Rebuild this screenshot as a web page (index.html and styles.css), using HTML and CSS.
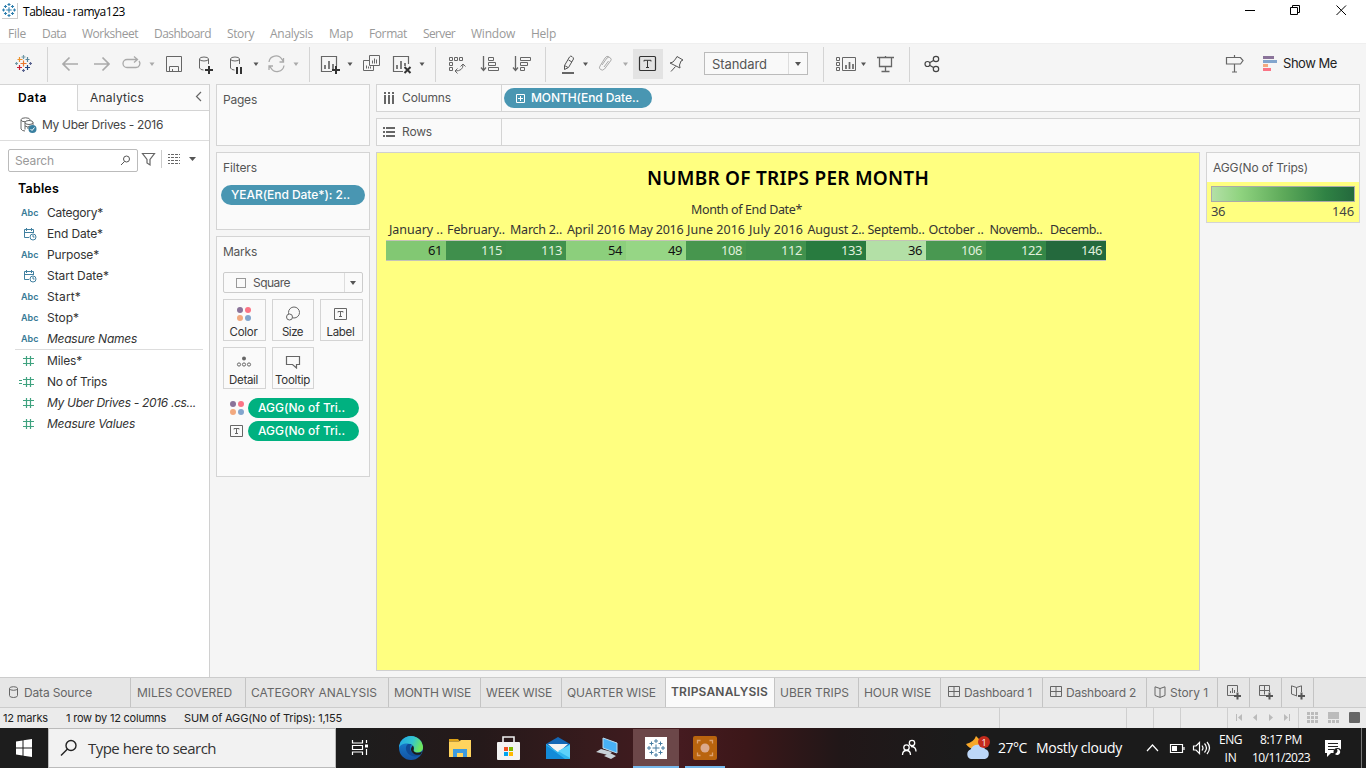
FILE: index.html
```html
<!DOCTYPE html>
<html lang="en">
<head>
<meta charset="utf-8">
<title>Tableau - ramya123</title>
<link rel="stylesheet" href="styles.css">
</head>
<body>
<svg class="defs" width="0" height="0">
  <defs>
    <symbol id="marks" viewBox="0 0 18 18"><path d="M9 5.500v7M5.500 9h7M9 0v4M7 2h4M9 14v4M7 16h4M0 9h4M2 7v4M14 9h4M16 7v4M4.500 2.500v4M2.500 4.500h4M13.500 2.500v4M11.500 4.500h4M4.500 11.500v4M2.500 13.500h4M13.500 11.500v4M11.500 13.500h4"/></symbol>
    <symbol id="dots" viewBox="0 0 14 14"><circle cx="3" cy="3" r="3" fill="#8a7399"/><circle cx="11" cy="3" r="3" fill="#fa7485"/><circle cx="3" cy="11" r="3" fill="#f2a97f"/><circle cx="11" cy="11" r="3" fill="#82a5cd"/></symbol>
    <symbol id="tee" viewBox="0 0 13 12"><path d="M.5.5h12v11H.5zM4 4.500v-1h5v1M6.500 3.500v5M5 8.500h3" fill="none" stroke="#666"/></symbol>
    <symbol id="hash" viewBox="0 0 20 12"><path d="M7.500 1v10M11.500 1v10M4 3.500h11M4 8.500h11" fill="none" stroke="#3fa27f" stroke-width="1.200"/></symbol>
    <symbol id="cal" viewBox="0 0 14 14"><path d="M6 10.500H1.500v-8h9V6M1.500 5.500h9M3.500 1v3M8.500 1v3" fill="none" stroke="#4180a0"/><circle cx="10" cy="10" r="3" fill="#fff" stroke="#4180a0"/><path d="M10 8v2h1.500" fill="none" stroke="#4180a0"/></symbol>
    <symbol id="grid" viewBox="0 0 12 11"><path d="M.5.500h11v10H.5zM.5 5.500h11M6 .5v10" fill="none" stroke="#666"/></symbol>
    <symbol id="book" viewBox="0 0 12 12"><path d="M6 2.500 1 .8v8.700l5 1.900 5-1.900V.8zM6 2.500v8.800" fill="none" stroke="#666"/></symbol>
  </defs>
</svg>

<header class="titlebar">
  <span class="appicon"><svg width="14" height="14"><use href="#marks"/></svg></span>
  <span class="apptitle" data-w="102">Tableau - ramya123</span>
  <svg class="winbtns" width="126" height="22" viewBox="1240 0 126 22" fill="none" stroke="#000"><path d="M1245 10.500h10M1290.500 7.500h7v7h-7zM1292.500 7.500v-2h7v7h-2M1336.500 5.500l9.500 9.500M1346 5.500l-9.500 9.500"/></svg>
</header>
<nav class="menu">
  <span style="width:34px"><b data-w="18">File</b></span><span style="width:40px"><b data-w="24">Data</b></span><span style="width:72px"><b data-w="56">Worksheet</b></span><span style="width:73px"><b data-w="57">Dashboard</b></span><span style="width:43px"><b data-w="27">Story</b></span><span style="width:59px"><b data-w="43">Analysis</b></span><span style="width:40px"><b data-w="24">Map</b></span><span style="width:54px"><b data-w="38">Format</b></span><span style="width:48px"><b data-w="32">Server</b></span><span style="width:60px"><b data-w="44">Window</b></span><span><b data-w="25">Help</b></span>
</nav>

<div class="toolbar">
  <svg width="48" height="35" viewBox="0 47 48 35" fill="none" stroke-width="1.200"><path stroke="#e8762c" d="M20.500 63.500h6M23.500 60.500v6"/><path stroke="#7199a6" d="M21.500 57h4M23.500 55v4M15 63.500h3M16.500 62v3"/><path stroke="#eb912c" d="M17.500 59.500h5M19.500 57v5"/><path stroke="#59879b" d="M25.500 59.500h4M27.500 57v5"/><path stroke="#c72035" d="M17 67.500h5M19.500 65v5"/><path stroke="#1f457e" d="M25 67.500h5M27.500 65v5"/><path stroke="#5b6591" d="M29 63.500h3M30.500 62v3M22 70.500h3M23.500 69v3"/></svg>
  <svg class="sep" width="262" height="35" viewBox="48 47 262 35" fill="none" stroke="#666">
    <g stroke="#aaa"><path stroke-width="1.700" d="M78 64H63M69.500 57.500 63 64l6.500 6.500M94 64h15M102.500 57.500 109 64l-6.500 6.500"/><path stroke-width="1.300" d="M130 59.500h-3a4 4 0 0 0 0 8h9a4 4 0 0 0 3-6.500M130 59.500h7M134 56.500l3.500 3-3.500 3"/><path stroke-width="1.300" d="M269 62a7 7 0 0 1 13-2.500l1.500 2M284 65.500a7 7 0 0 1-13 2.500l-1.500-2M283.500 58v4h-4M269 70v-4h4"/></g>
    <path d="M149.500 62.500h5L152 66zM293.500 62.500h5L296 66z" fill="#aaa" stroke="none"/>
    <path d="M166.500 56.500h15v15h-15zM169.500 71.500v-5h9v5M172.500 71v-2"/>
    <ellipse cx="204" cy="59" rx="4.500" ry="2"/><path d="M199.500 59v9q1 2 4 2M208.500 59v5"/><path stroke="#333" stroke-width="2" d="M205 70h8M209 66v8"/>
    <ellipse cx="235" cy="59" rx="4.500" ry="2"/><path d="M230.500 59v9q1 2 4 2M239.500 59v5"/><path stroke="#333" stroke-width="2" d="M237 67v7M241 67v7"/>
    <path d="M253.500 62.500h5L256 66z" fill="#555" stroke="none"/>
  </svg>
  <svg class="sep" width="126" height="35" viewBox="310 47 126 35" fill="none" stroke="#666">
    <path d="M332 71.500h-10.500v-15h15V66" stroke-width="1.200"/><path stroke-width="1.700" d="M325 69v-4M329 69v-8M333 69v-5"/><path stroke="#333" stroke-width="2" d="M332 70h8M336 66v8"/><path d="M347.500 62.500h5L350 66zM419.500 62.500h5L422 66z" fill="#555" stroke="none"/>
    <path d="M369.500 55.500h10v10h-10zM369 60.500h-5.500v10h10V66M372.500 63.500v-3M374.500 63.500v-5M376.500 63.500v-4M366.500 68.500v-3M368.500 68.500v-2M370.500 68.500v-2"/>
    <path d="M403 71.500h-9.500v-15h15V64" stroke-width="1.200"/><path stroke-width="1.700" d="M397 69v-4M401 69v-8M405 66v-3"/><path stroke="#333" stroke-width="2" d="M404.500 67l6 6M410.500 67l-6 6"/>
  </svg>
  <svg class="sep" width="110" height="35" viewBox="436 47 110 35" fill="none" stroke="#666">
    <path d="M449.500 57.500h3v3h-3zM454.500 57.500h3v3h-3zM459.500 57.500h3v3h-3zM449.500 62.500h3v3h-3zM449.500 67.500h3v3h-3zM455 71q8 0 8-6M457.500 68.500 455 71l2.500 2.500M460.500 66.500l2.500-2.500 2.500 2.500"/>
    <path stroke-width="1.300" d="M483.500 56v14M481 67.500l2.500 3 2.500-3M515.500 56v14M513 67.500l2.500 3 2.500-3"/><path d="M488.500 57.500h5v3h-5zM488.500 62.500h7v3h-7zM488.500 67.500h10v3h-10zM520.500 57.500h10v3h-10zM520.500 62.500h7v3h-7zM520.500 67.500h4v3h-4z"/>
  </svg>
  <svg class="sep" width="158" height="35" viewBox="546 47 158 35" fill="none" stroke="#555">
    <path fill="#e3e3e3" stroke="none" d="M633 49h30v30h-30z"/>
    <path d="M564.500 65.500l5-8.500q1-1.500 2.500-.5t1.500 2.500l-5 8.500-4 2zM564.500 65.500l3.500 2M568.500 60l3.500 2"/><path stroke="#666" stroke-width="2" d="M562 73h12"/><path d="M583 62.500h5l-2.500 3.500z" fill="#555" stroke="none"/>
    <path stroke="#aaa" d="M602 65l5-7q2-2 3.500 0t0 3l-6 8q-2 2-4 .5t-.5-3.500l5-8q2-3 4-1M604 67l4.500-6"/><path d="M623 62.500h5l-2.500 3.500z" fill="#aaa" stroke="none"/>
    <rect x="639.500" y="56.500" width="16" height="14" rx="1" stroke="#333" stroke-width="1.200"/><path stroke="#333" d="M644 61.500v-1.200h7v1.200M647.500 60.500v7M646 67.500h3"/>
    <path d="M677 56.500l6 3.500-2 1-1.500 4 .5 3-3-1.500-4-2-3-1.500 3-1 2.500-3zM675.500 66.500l-4.500 5"/>
  </svg>
  <div class="fit"><span data-w="55">Standard</span><i></i></div>
  <svg class="sep fitnext" width="86" height="35" viewBox="824 47 86 35" fill="none" stroke="#666">
    <path d="M836.500 57.500h3v3h-3zM836.500 62.500h3v3h-3zM836.500 67.500h3v3h-3zM842.500 57.500h13v13h-13z"/><path stroke-width="1.700" d="M846 69v-4M849.500 69v-7M853 69v-5"/><path d="M861 62.500h5l-2.500 3.500z" fill="#555" stroke="none"/>
    <path stroke-width="1.300" d="M877 57.500h17M879.500 58v8.500h12V58M885.500 56v1M885.500 67v4M881.500 71.500h8"/>
  </svg>
  <svg class="sep" width="40" height="35" viewBox="910 47 40 35" fill="none" stroke="#444" stroke-width="1.200"><circle cx="927.500" cy="64" r="2.500"/><circle cx="936" cy="59" r="2.700"/><circle cx="936" cy="69" r="2.700"/><path d="M930 62.500l3.500-2M930 65.500l3.500 2"/></svg>
  <svg class="guide" width="62" height="35" viewBox="1216 47 62 35" fill="none" stroke="#666" stroke-width="1.200"><path d="M1226.500 57.500h14l2.500 3-2.500 3.500h-14zM1234.500 55v2M1234.500 64v8M1232 72h5"/><g stroke="none"><path fill="#8a7399" d="M1263 56h11v3h-11z"/><path fill="#82a5cd" d="M1263 60h14v3h-14z"/><path fill="#f2a97f" d="M1263 64h5v3h-5z"/><path fill="#fa7485" d="M1263 68h8v3h-8z"/></g></svg>
  <span class="showme" data-w="54">Show Me</span>
</div>

<main class="work">
  <aside class="datapane">
    <div class="panetabs"><div class="on"><span data-w="29">Data</span></div><div class="off"><span data-w="54">Analytics</span><svg width="8" height="12" viewBox="0 0 8 12"><path d="M6 1 1.500 5.500 6 10" fill="none" stroke="#666" stroke-width="1.200"/></svg></div></div>
    <div class="source"><svg width="18" height="17" viewBox="0 0 18 17" fill="none" stroke="#666"><ellipse cx="5.500" cy="2.800" rx="4.500" ry="2"/><path d="M1 3v9q1 2 4 2"/><ellipse cx="9" cy="5.500" rx="4" ry="2" fill="#fff"/><path d="M5 5.500v7M5 9q3 2 5 0M13 5.500v3M7 11h3"/><circle cx="12.500" cy="12" r="4" fill="#387fa0" stroke="none"/><path stroke="#fff" d="M10.500 12l1.500 1.500 2.500-3"/></svg><span data-w="121">My Uber Drives - 2016</span></div>
    <div class="searchrow">
      <div class="search"><span data-w="39">Search</span><svg width="11" height="11" viewBox="0 0 11 11" fill="none" stroke="#555"><circle cx="6.500" cy="4" r="3"/><path d="M4.500 6.500 1 10"/></svg></div>
      <svg width="56" height="20" viewBox="141 150 56 20" fill="none" stroke="#666"><path stroke-width="1.200" d="M142.500 154.500h12l-4.500 6v5.500l-3-2v-3.500z"/><path stroke="#ccc" d="M161.500 151v18"/><path stroke-dasharray="2 1 3 1 3 1 2" d="M168 155.500h12M168 158.500h12M168 161.500h12M168 164.500h12"/><path fill="#555" stroke="none" d="M189 158h7l-3.500 4z"/></svg>
    </div>
    <h2><span data-w="41">Tables</span></h2>
    <ul class="fields">
      <li><em>Abc</em><span data-w="56">Category*</span></li>
      <li><svg width="14" height="14"><use href="#cal"/></svg><span data-w="56">End Date*</span></li>
      <li><em>Abc</em><span data-w="52">Purpose*</span></li>
      <li><svg width="14" height="14"><use href="#cal"/></svg><span data-w="62">Start Date*</span></li>
      <li><em>Abc</em><span data-w="34">Start*</span></li>
      <li><em>Abc</em><span data-w="32">Stop*</span></li>
      <li class="it"><em>Abc</em><span data-w="90">Measure Names</span></li>
    </ul>
    <ul class="fields measures">
      <li><svg width="20" height="12"><use href="#hash"/></svg><span data-w="35">Miles*</span></li>
      <li><svg width="20" height="12"><use href="#hash"/><path stroke="#3fa27f" d="M0 4.500h3M0 7.500h3"/></svg><span data-w="60">No of Trips</span></li>
      <li class="it"><svg width="20" height="12"><use href="#hash"/></svg><span data-w="149">My Uber Drives - 2016 .cs...</span></li>
      <li class="it"><svg width="20" height="12"><use href="#hash"/></svg><span data-w="88">Measure Values</span></li>
    </ul>
  </aside>

  <section class="cards">
    <div class="card pages"><h3 data-w="34">Pages</h3></div>
    <div class="card filters"><h3 data-w="34">Filters</h3><div class="pill blue"><span data-w="119">YEAR(End Date*): 2..</span></div></div>
    <div class="card marks">
      <h3 data-w="34">Marks</h3>
      <div class="marktype"><i class="sq"></i><span data-w="37">Square</span><i class="drop"></i></div>
      <div class="props">
        <div><svg width="14" height="14"><use href="#dots"/></svg><span data-w="28">Color</span></div>
        <div><svg width="16" height="16" viewBox="0 0 16 16" fill="none" stroke="#666"><circle cx="9" cy="6.500" r="5.500"/><circle cx="4.500" cy="11" r="3" fill="#fafafa"/></svg><span data-w="21">Size</span></div>
        <div><svg width="13" height="12"><use href="#tee"/></svg><span data-w="28">Label</span></div>
        <div><svg width="16" height="12" viewBox="0 0 16 12" fill="none" stroke="#666"><circle cx="8" cy="2.500" r="2" fill="#666" stroke="none"/><circle cx="3" cy="8.500" r="1.600"/><circle cx="8" cy="8.500" r="1.600"/><circle cx="13" cy="8.500" r="1.600"/></svg><span data-w="29">Detail</span></div>
        <div><svg width="16" height="14" viewBox="0 0 16 14"><path d="M1.500 1.500h13v8h-3v3.500l-4-3.500h-6z" fill="none" stroke="#666" stroke-width="1.200"/></svg><span data-w="35">Tooltip</span></div>
      </div>
      <div class="enc"><svg width="14" height="14"><use href="#dots"/></svg><div class="pill green"><span data-w="87">AGG(No of Tri..</span></div></div>
      <div class="enc"><svg width="14" height="12" viewBox="0 0 14 12"><use href="#tee" width="13" height="12"/></svg><div class="pill green"><span data-w="87">AGG(No of Tri..</span></div></div>
    </div>
  </section>

  <section class="canvas">
    <div class="shelf"><div class="label"><svg width="12" height="12" fill="#666"><path d="M1 0h2v2H1zM5 0h2v2H5zM9 0h2v2H9zM1 3h2v9H1zM5 3h2v9H5zM9 3h2v9H9z"/></svg><span data-w="49">Columns</span></div><div class="pill blue wide"><svg width="9" height="9"><path d="M.5.5h8v8h-8zM2 4.500h5M4.500 2v5" fill="none" stroke="#fff"/></svg><span data-w="108">MONTH(End Date..</span></div></div>
    <div class="shelf"><div class="label"><svg width="12" height="12" fill="#666"><path d="M0 1h2v2H0zM0 5h2v2H0zM0 9h2v2H0zM3 1h9v2H3zM3 5h9v2H3zM3 9h9v2H3z"/></svg><span data-w="30">Rows</span></div></div>
    <div class="viewrow">
      <div class="view">
        <h1><span data-w="282">NUMBR OF TRIPS PER MONTH</span></h1>
        <div class="axis"><span data-w="111">Month of End Date*</span></div>
        <div class="months">
          <div><span data-w="54">January ..</span></div><div><span data-w="58">February..</span></div><div><span data-w="52">March 2..</span></div><div><span data-w="58">April 2016</span></div><div><span data-w="55">May 2016</span></div><div><span data-w="58">June 2016</span></div><div><span data-w="54">July 2016</span></div><div><span data-w="57">August 2..</span></div><div><span data-w="57">Septemb..</span></div><div><span data-w="55">October ..</span></div><div><span data-w="53">Novemb..</span></div><div><span data-w="52">Decemb..</span></div>
        </div>
        <div class="values">
          <div style="background:#82c873" class="dk"><span data-w="14">61</span></div><div style="background:#3f8f4c"><span data-w="21">115</span></div><div style="background:#40914d"><span data-w="21">113</span></div><div style="background:#8ccf7c" class="dk"><span data-w="14">54</span></div><div style="background:#96d685" class="dk"><span data-w="14">49</span></div><div style="background:#47964e"><span data-w="21">108</span></div><div style="background:#41914d"><span data-w="21">112</span></div><div style="background:#287b3f"><span data-w="21">133</span></div><div style="background:#b3e0a6" class="dk"><span data-w="14">36</span></div><div style="background:#499851"><span data-w="21">106</span></div><div style="background:#348747"><span data-w="21">122</span></div><div style="background:#24693d"><span data-w="21">146</span></div>
        </div>
      </div>
      <div class="legend"><h3><span data-w="95">AGG(No of Trips)</span></h3><div class="ramp"><i></i><div><span data-w="14">36</span><span data-w="22">146</span></div></div></div>
    </div>
  </section>
</main>

<nav class="tabs">
  <div style="width:131px" class="ds"><svg width="9" height="12" viewBox="0 0 9 12" fill="none" stroke="#666"><path d="M.5 2.500v7q0 2 4 2t4-2v-7"/><ellipse cx="4.500" cy="2.500" rx="4" ry="1.800"/></svg><span data-w="68">Data Source</span></div>
  <div style="width:115px" class="first"><span data-w="95">MILES COVERED</span></div>
  <div style="width:143px"><span data-w="126">CATEGORY ANALYSIS</span></div>
  <div style="width:92px"><span data-w="77">MONTH WISE</span></div>
  <div style="width:81px"><span data-w="66">WEEK WISE</span></div>
  <div style="width:104px"><span data-w="89">QUARTER WISE</span></div>
  <div style="width:109px" class="active"><span data-w="97">TRIPSANALYSIS</span></div>
  <div style="width:84px"><span data-w="69">UBER TRIPS</span></div>
  <div style="width:82px"><span data-w="67">HOUR WISE</span></div>
  <div style="width:102px" class="ic"><svg width="12" height="11"><use href="#grid"/></svg><span data-w="68">Dashboard 1</span></div>
  <div style="width:104px" class="ic"><svg width="12" height="11"><use href="#grid"/></svg><span data-w="70">Dashboard 2</span></div>
  <div style="width:71px" class="ic"><svg width="12" height="12"><use href="#book"/></svg><span data-w="38">Story 1</span></div>
  <div class="new"><svg width="16" height="15" fill="none" stroke="#666"><path d="M9 10.500H1.500v-10h10V7M4.500 8V6M6.500 8V3M8.500 8V5"/><path stroke="#555" stroke-width="2" d="M8 11h7M11.500 7.500v7"/></svg></div>
  <div class="new"><svg width="16" height="15" fill="none" stroke="#666"><path d="M8 10.500H1.500v-10h10V7M1.500 5.500h10M6.500.5v9"/><path stroke="#555" stroke-width="2" d="M8 11h7M11.500 7.500v7"/></svg></div>
  <div class="new"><svg width="16" height="15" fill="none" stroke="#666"><path d="M7 11 1.500 9V.8l5 1.700 5-1.700V7M6.500 2.500V11"/><path stroke="#555" stroke-width="2" d="M8 11h7M11.500 7.500v7"/></svg></div>
</nav>
<div class="status">
  <span class="s1" data-w="45">12 marks</span><span class="s2" data-w="100">1 row by 12 columns</span><span class="s3" data-w="158">SUM of AGG(No of Trips): 1,155</span>
  <svg width="367" height="20" viewBox="999 708 367 20"><path stroke="#cfcfcf" d="M999.500 708v20M1126.500 708v20M1153.500 708v20M1180.500 708v20M1227.500 708v20M1298.500 708v20"/><path fill="#bbb" d="M1236 714h1v7h-1zM1242 714v7l-4-3.500zM1257 714v7l-4-3.500zM1269 714v7l4-3.500zM1284 714v7l4-3.500zM1289 714h1v7h-1zM1307 712h3v3h-3zM1311 712h3v3h-3zM1315 712h3v3h-3zM1307 716h3v3h-3zM1311 716h3v3h-3zM1315 716h3v3h-3zM1307 720h3v3h-3zM1311 720h3v3h-3zM1315 720h3v3h-3zM1328 712h11v7h-11zM1328 720h3v3h-3zM1332 720h3v3h-3zM1336 720h3v3h-3z"/><rect x="1349" y="712" width="11" height="11" rx="1" fill="#666"/></svg>
</div>

<footer class="taskbar">
  <svg width="48" height="40" viewBox="0 728 48 40"><path fill="#fff" d="M16 741.500l6.500-1v7H16zM23.500 740.300l8.500-1.200v8.400h-8.500zM16 748.500h6.500v7l-6.500-1zM23.500 748.500H32v8.400l-8.500-1.200z"/></svg>
  <div class="winsearch"><svg width="18" height="18" viewBox="0 0 18 18" fill="none" stroke="#222" stroke-width="1.400"><circle cx="11" cy="6.500" r="5"/><path d="M7.500 10 1 16.500"/></svg><span data-w="128">Type here to search</span></div>
  <svg width="49" height="40" viewBox="336 728 49 40" fill="none" stroke="#fff" stroke-width="1.200"><path d="M352.500 740v3h10v-3M352.500 755v-3h10v3M352.500 745.500h10v4h-10zM366.500 740v3M366.500 749v6"/><path stroke-width="3" d="M365 746h3"/></svg>
  <svg width="50" height="40" viewBox="385 728 50 40"><defs><linearGradient id="e1" x2="1" y2=".3"><stop offset="0" stop-color="#20a5e6"/><stop offset=".6" stop-color="#34c5cf"/><stop offset="1" stop-color="#6de65f"/></linearGradient><linearGradient id="e2" x2="0" y2="1"><stop offset="0" stop-color="#1787d8"/><stop offset="1" stop-color="#1454a4"/></linearGradient></defs><circle cx="411" cy="748" r="12" fill="url(#e2)"/><path d="M399 748a12 12 0 0 1 24 0c0 5-9 6-9.500 2.500 2-4-2-7-6-7-5 0-8 2-8.500 4.500z" fill="url(#e1)"/><path d="M408 744c-4 3-2 10 4 12 4 1 7 0 9-2-6 1-11-1-11-6 0-2 1-4 2.500-4z" fill="#0f4b97"/><path d="M413.500 750.500c1 3 7 3 9 .5l-2 3.500c-5 1-9-1-9.500-5 0-2 1-3 2-4q1.500 2.500.5 5z" fill="#1d1b1b"/></svg>
  <svg width="50" height="40" viewBox="435 728 50 40"><path fill="#dca117" d="M449 739h9l2 2.500h-11z"/><path fill="#ffd45e" d="M449 741.500h10l2-1.500h10v17h-22z"/><path fill="#3c9be0" d="M453 757v-8h14v8h-4v-4h-6v4z"/></svg>
  <svg width="48" height="40" viewBox="485 728 48 40"><path d="M503 742v-5h11v5" fill="none" stroke="#eee" stroke-width="1.600"/><rect x="497" y="742" width="23" height="18" rx="1" fill="#f3f3f3"/><path fill="#f25022" d="M504 747h4v4h-4z"/><path fill="#7fba00" d="M509 747h4v4h-4z"/><path fill="#00a4ef" d="M504 752h4v4h-4z"/><path fill="#ffb900" d="M509 752h4v4h-4z"/></svg>
  <svg width="49" height="40" viewBox="533 728 49 40"><path fill="#1467b5" d="M546 744l12-7 12 7v6h-24z"/><path fill="#f3f3f3" d="M548 744h20l-10 9z"/><path fill="#2fb5ee" d="M546 744l12 8 12-8v15h-24z"/><path fill="#138bd8" d="M546 745v14h19z"/><path fill="#5dd2fa" d="M570 745v13l-12-7z"/></svg>
  <svg width="51" height="40" viewBox="582 728 51 40"><path fill="#48b1f5" stroke="#b9dcef" d="M603 738l14 5v10l-14-5z"/><path fill="#c9d2d8" d="M596 752l5-3 11 3-4 3zM604 756l6-3 6 3-5 3z"/></svg>
  <svg width="46" height="40" viewBox="633 728 46 40"><path fill="#6c4749" d="M633 729h46v37h-46z"/><path fill="#76b9ed" d="M633 766h46v2h-46z"/><path fill="#fff" d="M645 737h22v22h-22z"/><use href="#marks" x="647" y="739" width="18" height="18" fill="none" stroke="#467ca2"/></svg>
  <svg class="rec" width="40" height="40" viewBox="685 728 40 40"><path fill="#76b9ed" d="M685 766h40v2h-40z"/><rect x="693" y="736" width="24" height="24" rx="2" fill="#b9640e"/><circle cx="705" cy="748" r="4.500" fill="#dba98c"/><path d="M697.500 743.500v-3h3M709.500 740.500h3v3M697.500 752.500v3h3M709.500 755.500h3v-3" fill="none" stroke="#dba070" stroke-width="1.300"/></svg>
  <svg class="people" width="98" height="40" viewBox="900 728 98 40"><g fill="none" stroke="#fff" stroke-width="1.300"><circle cx="912" cy="743" r="2.700"/><circle cx="906.500" cy="747.500" r="2.700"/><path d="M902.500 755q0-4.500 4-4.500t4 4.500M911 746.500q5 0 5 5"/></g><path fill="#f7a829" d="M976 736q-2 6-10 8 3 5 9 5 6-1 6-8z"/><path d="M971 759a5 5 0 0 1-.5-9.500 8 8 0 0 1 14.500-.5 5.200 5.200 0 0 1 0 10z" fill="#bcd7f8"/><circle cx="984" cy="742" r="6" fill="#c42b1c"/><text x="981.500" y="745.500" class="badge">1</text></svg>
  <span class="temp" data-w="29">27°C</span><span class="cloudy" data-w="86">Mostly cloudy</span>
  <svg width="92" height="40" viewBox="1122 728 92 40" fill="none" stroke="#fff" stroke-width="1.200"><path d="M1147 751l5.500-6 5.500 6M1170.500 744.500h12v8h-12zM1184 747v3"/><path fill="#fff" stroke="none" d="M1172 746h5v5h-5z"/><path d="M1193.500 746h2.500l3.500-3.500v11l-3.500-3.500h-2.500zM1202 745.500q2 2.500 0 5M1204.500 743.500q4 4.500 0 9M1207 742q5 6 0 12"/></svg>
  <div class="two lang"><span data-w="23">ENG</span><span data-w="12">IN</span></div>
  <div class="two clock"><span data-w="42">8:17 PM</span><span data-w="58">10/11/2023</span></div>
  <svg width="55" height="40" viewBox="1311 728 55 40"><path fill="#fff" d="M1325 740h16v13h-10l-4 4v-4h-2z"/><path stroke="#222" d="M1328 743.500h10M1328 746.500h10M1328 749.500h6"/><circle cx="1337.500" cy="752" r="4" fill="#1b1b1b"/><path d="M1335 754a3 3 0 1 0 2-5q1.500 3-2 5z" fill="#fff"/><path stroke="#777" d="M1361.500 728v40"/></svg>
</footer>
<script src="labels.js"></script>
</body>
</html>
```
FILE: styles.css
```css
* { box-sizing: border-box; }
body { margin: 0; width: 1366px; height: 768px; overflow: hidden; display: flex; flex-direction: column; background: #f5f5f5; color: #333; font: 12px/16px Inter, "Open Sans", sans-serif; }
svg { display: block; flex: none; }
.defs { position: absolute; }
span, b, h3 { white-space: nowrap; }
b { font-weight: 400; }
h1, h2, h3, ul { margin: 0; padding: 0; font-weight: 400; }
[data-w] { display: inline-block; flex: none; }

.titlebar { height: 22px; flex: none; background: #fff; display: flex; align-items: center; color: #000; font: 12px/16px "Open Sans", sans-serif; }
.apptitle { margin-top: 2px; }
.appicon { width: 16px; height: 16px; margin: 0 5px 0 2px; border: solid #ccc; border-width: 0 1px 1px 0; }
.appicon svg { fill: none; stroke: #2f7fae; stroke-width: 1.4; }
.winbtns { margin-left: auto; }
.menu { height: 21px; flex: none; background: #fff; padding: 4px 0 0 8px; display: flex; color: #999; font: 12px/16px "Open Sans", sans-serif; }

.toolbar { height: 41px; flex: none; display: flex; padding-top: 3px; border-top: 1px solid #efefef; }
.toolbar .sep { box-shadow: -1px 0 #d4d4d4; }
.fit { width: 104px; height: 23px; margin-top: 5px; border: 1px solid #bbb; display: flex; align-items: center; padding-left: 7px; font-size: 13px; color: #555; background: #f9f9f9; }
.fit i { width: 19px; height: 21px; margin-left: auto; border-left: 1px solid #ddd; }
.fit i::after, .drop::after { content: ""; display: block; width: 0; border: solid transparent; border-width: 4px 3.5px 0; border-top-color: #555; margin: 9px 0 0 6px; }
.fitnext { margin-left: 16px; }
.guide { margin-left: 266px; }
.showme { margin: 8px 0 0 5px; font-size: 13px; color: #222; }

.work { height: 593px; flex: none; display: flex; }
.datapane { width: 210px; background: #fff; border-right: 1px solid #d0d0d0; border-top: 1px solid #d4d4d4; }
.panetabs { height: 26px; display: flex; font-size: 12px; }
.panetabs .on { width: 77px; padding: 5px 0 0 18px; font-weight: 600; color: #000; }
.panetabs .off { flex: 1; padding: 5px 6px 0 12px; border: solid #d4d4d4; border-width: 0 0 1px 1px; background: #fafafa; display: flex; justify-content: space-between; }
.panetabs svg { margin-top: 1px; }
.source { height: 30px; border-bottom: 1px solid #ddd; display: flex; align-items: center; gap: 4px; padding: 0 0 1px 20px; color: #444; }
.searchrow { display: flex; height: 23px; margin: 8px 0 0 8px; gap: 3px; }
.search { width: 130px; border: 1px solid #bbb; border-radius: 2px; display: flex; align-items: center; justify-content: space-between; padding: 0 6px; color: #999; }
h2 { height: 30px; padding: 9px 0 0 18px; font-size: 12.500px; font-weight: 600; color: #000; }
.fields { list-style: none; }
.fields li { height: 21px; padding-left: 20px; display: flex; align-items: center; color: #333; }
.fields em { width: 27px; padding-left: 1px; font: 600 9px/12px Inter, sans-serif; color: #387a96; }
.fields svg { width: 20px; margin-right: 7px; }
.fields .it span { font-style: italic; }
.measures { margin: 0 6px 0 15px; border-top: 1px solid #ddd; }
.measures li { padding-left: 4px; }
.measures svg { margin-right: 8px; }

.cards { width: 154px; margin: 0 6px; display: flex; flex-direction: column; gap: 6px; }
.card { border: 1px solid #d4d4d4; background: #fafafa; padding: 7px 6px; }
.card h3, .legend h3 { font-size: 12px; color: #555; }
.pages { height: 62px; }
.filters { height: 78px; }
.marks { height: 241px; }
.pill { height: 20px; border-radius: 10px; color: #fff; font-weight: 500; display: flex; align-items: center; padding-left: 10px; }
.blue { background: #4996b2; }
.green { background: #00b180; width: 111px; }
.filters .pill { width: 144px; margin: 9px 0 0 -2px; }
.marktype { margin-top: 12px; width: 140px; height: 21px; border: 1px solid #ccc; border-radius: 2px; display: flex; align-items: center; color: #555; }
.sq { width: 10px; height: 10px; border: 1px solid #999; margin: 0 7px 0 12px; }
.drop { width: 18px; height: 19px; border-left: 1px solid #ddd; margin-left: auto; }
.drop::after { margin: 8px 0 0 5px; }
.props { margin-top: 6px; display: grid; grid-template-columns: 43px 42px 43px; gap: 6px; }
.props div { height: 42px; border: 1px solid #d4d4d4; padding-right: 1px; display: grid; grid-template-rows: 27px 13px; justify-items: center; align-items: center; }
.props div:nth-child(1), .props div:nth-child(3), .props div:nth-child(4) { padding-right: 2px; }
.props span { line-height: 13px; margin-top: -3px; font-size: 11.500px; }
.props svg { margin-top: 1px; }
.enc { display: flex; align-items: center; gap: 4px; margin: 3px 0 0 7px; }
.props + .enc { margin-top: 9px; }

.canvas { width: 984px; display: flex; flex-direction: column; gap: 6px; }
.shelf { height: 28px; border: 1px solid #d4d4d4; background: #fafafa; display: flex; align-items: center; }
.label { width: 125px; height: 26px; border-right: 1px solid #d4d4d4; padding-left: 6px; display: flex; align-items: center; gap: 7px; color: #555; }
.wide { width: 148px; margin-left: 2px; padding-left: 12px; gap: 6px; }
.viewrow { height: 519px; display: flex; gap: 6px; }
.view { width: 824px; border: 1px solid #d0d0d0; background: #ffff80; padding: 0 9px; }
h1 { height: 49px; padding-top: 13px; text-align: center; font: 600 19px/24px "Noto Sans", sans-serif; color: #000; }
.axis, .months, .values, .ramp { font: 12.500px/16px "Noto Sans", sans-serif; }
.axis { width: 721px; text-align: center; height: 20px; }
.months { width: 720px; display: grid; grid-template-columns: repeat(12, 60px); height: 18px; text-align: center; }
.values { width: 720px; height: 21px; display: grid; grid-template-columns: repeat(12, 60px); border: solid #c4c4b8; border-width: 1px 0; color: #e0f0dc; font-size: 13px; }
.values div { text-align: right; padding: 1px 4px 0 0; line-height: 16px; }
.values .dk { color: #111; }
.legend { width: 154px; height: 71px; border: 1px solid #d4d4d4; background: #fafafa; }
.legend h3 { height: 29px; padding: 7px 0 0 6px; }
.ramp { height: 40px; background: #ffff80; padding: 4px 4px 0; color: #444; font-size: 13px; }
.ramp i { display: block; height: 16px; border: 1px solid #aaa; background: linear-gradient(90deg, #b3e0a6, #8fd37f 20%, #5eaa5a 50%, #2f8244 80%, #24693d); }
.ramp div { display: flex; justify-content: space-between; margin-top: 1px; padding-right: 1px; }

.tabs { height: 31px; flex: none; border-top: 1px solid #ccc; border-bottom: 1px solid #ccc; background: #e6e6e6; display: flex; color: #666; }
.tabs > div { flex: none; border-right: 1px solid #c4c4c4; display: flex; align-items: center; padding-left: 5px; gap: 5px; }
.tabs .first { padding-left: 6px; }
.tabs .ds { padding-left: 9px; gap: 6px; }
.tabs .ds svg { margin-top: -2px; }
.tabs .ic { padding-left: 7px; gap: 4px; }
.tabs .ic svg { margin-top: -2px; }
.tabs .active { background: #fafafa; font-weight: 600; color: #555; padding-bottom: 1px; }
.tabs .new { width: 32px; padding-left: 8px; }
.status { height: 20px; flex: none; background: #ebebeb; display: flex; align-items: center; padding-left: 3px; font-size: 11px; color: #222; }
.s2 { margin-left: 18px; }
.s3 { margin-left: 18px; }
.status svg { margin-left: auto; }

.taskbar { height: 40px; flex: none; display: flex; align-items: center; color: #fff; background: linear-gradient(90deg, #1d1d1d 350px, #25191a 480px, #371b1d 590px, #451b20 680px, #3c1719 745px, #211718 840px, #1b1b1b 960px); font: 14px/20px "Open Sans", sans-serif; }
.winsearch { width: 288px; height: 40px; background: #f2f2f2; border: 1px solid #bbb; display: flex; align-items: center; color: #333; gap: 10px; padding-left: 11px; font-size: 15px; }
.rec { margin-left: 6px; }
.people { margin-left: 175px; }
.cloudy { margin-left: 9px; }
.two { height: 40px; display: flex; flex-direction: column; align-items: center; padding-top: 3px; font-size: 12px; line-height: 18px; }
.lang { width: 33px; }
.clock { width: 64px; padding-left: 4px; }
.badge { fill: #fff; font: 9px "Open Sans", sans-serif; }
```
FILE: labels.js
```js
// Track each label so that it fills its nominal width.
document.querySelectorAll('[data-w]').forEach(function (el) {
  var range = document.createRange();
  range.selectNodeContents(el);
  var natural = range.getBoundingClientRect().width;
  var extra = parseFloat(el.dataset.w) - natural;
  el.style.letterSpacing = extra / el.textContent.length + 'px';
});
```
